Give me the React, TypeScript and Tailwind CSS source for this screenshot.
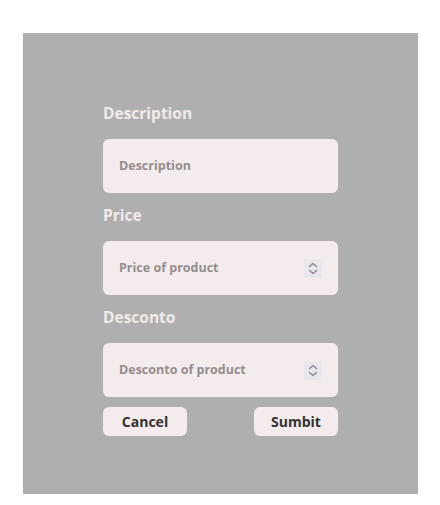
const fields = [
  { label: 'Description', placeholder: 'Description', spinner: false },
  { label: 'Price', placeholder: 'Price of product', spinner: true },
  { label: 'Desconto', placeholder: 'Desconto of product', spinner: true }
];

function Spinner() {
  return (
    <div className="w-[18px] h-[19px] bg-[#e9e7ee]">
      <svg width="18" height="19" viewBox="0 0 18 19" fill="none" stroke="#8e8b91" strokeWidth="1.5" strokeLinecap="round" strokeLinejoin="round">
        <path d="M5.5 7.5 L9 4.5 L12.5 7.5" />
        <path d="M5.5 11.5 L9 14.5 L12.5 11.5" />
      </svg>
    </div>
  );
}

export default function App() {
  return (
    <div className="w-[440px] h-[505px] bg-white pt-[33px] pl-[23px] font-['Open_Sans',sans-serif]">
      <div className="w-[395px] h-[461px] bg-[#afafaf] px-20 pt-[70px]">
        <form className="flex flex-col">
          {fields.map((field, index) => (
            <div key={index} className="flex flex-col">
              <label className="h-5 leading-5 text-[15.5px] font-bold text-[#f3eaea] mb-4">
                {field.label}
              </label>
              <div className="h-[54px] rounded-md bg-[#f4ebec] flex items-center justify-between px-4 mb-3">
                <span className="text-[12.5px] font-bold text-[#938d8d]">{field.placeholder}</span>
                {field.spinner && <Spinner />}
              </div>
            </div>
          ))}
          <div className="flex justify-between -mt-0.5">
            <button type="button" className="w-[84px] h-[29px] rounded-md bg-[#f4ebec] text-[14px] font-bold text-[#333333]">
              Cancel
            </button>
            <button type="button" className="w-[84px] h-[29px] rounded-md bg-[#f4ebec] text-[14px] font-bold text-[#333333]">
              Sumbit
            </button>
          </div>
        </form>
      </div>
    </div>
  );
}
